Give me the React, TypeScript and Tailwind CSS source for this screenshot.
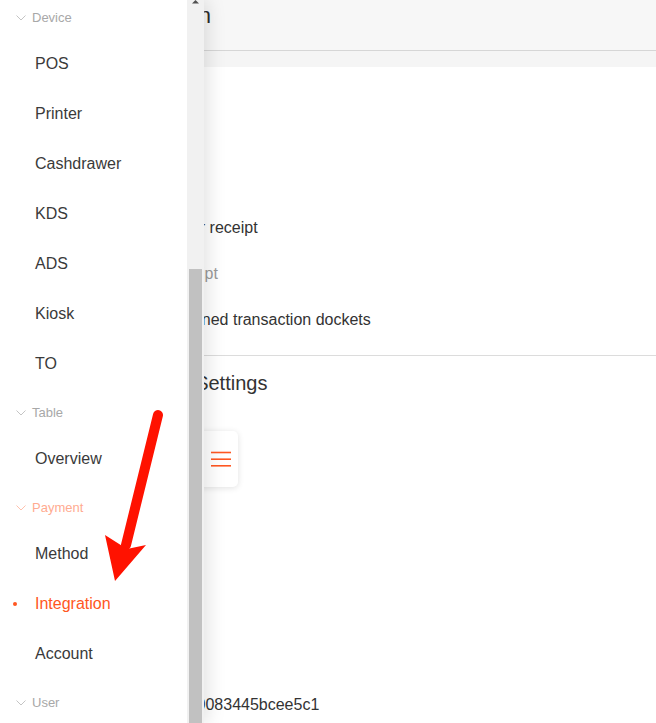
import React from "react";

const ORANGE = "#ff5722";

function Chevron({ color }: { color: string }) {
  return (
    <svg width="10" height="6" viewBox="0 0 10 6" className="shrink-0">
      <polyline points="0.5,0.5 5,5 9.5,0.5" fill="none" stroke={color} strokeWidth="1" />
    </svg>
  );
}

function GroupHeader({ label, active }: { label: string; active?: boolean }) {
  return (
    <div className="h-[45px] pt-[2px] flex items-center pl-[16px] gap-[6px]">
      <Chevron color={active ? "#ffc1ad" : "#c4c4c4"} />
      <span className={active ? "text-[13px] text-[#ffab91]" : "text-[13px] text-[#a8a8a8]"}>{label}</span>
    </div>
  );
}

function Item({ label, active }: { label: string; active?: boolean }) {
  return (
    <div className="h-[50px] flex items-center relative">
      {active && <span className="absolute left-[13px] top-[23px] w-[4px] h-[4px] rounded-full bg-[#ff5722]" />}
      <span className={active ? "pl-[35px] text-[16px] text-[#ff5722]" : "pl-[35px] text-[16px] text-[#3a3a3a]"}>
        {label}
      </span>
    </div>
  );
}

export default function App() {
  return (
    <div className="relative w-[656px] h-[723px] overflow-hidden bg-white font-['Liberation_Sans',Arial,sans-serif]">
      {/* Main page */}
      <div className="flex flex-col w-full">
        <div className="h-[51px] bg-[#f7f7f7] border-b border-[#d6d6d6] pt-[2px] pl-[14px]">
          <span className="text-[22px] leading-[28px] text-[#2b2b2b]">Payment Integration</span>
        </div>
        <div className="h-[16px] bg-[#f5f5f5]" />
        <div className="flex flex-col pt-[138px]">
          <div className="h-[46px] flex items-center pl-[102px] text-[16px] text-[#333]">Print customer receipt</div>
          <div className="h-[46px] flex items-center pl-[97px] text-[16px] text-[#9a9a9a]">Auto print receipt</div>
          <div className="h-[46px] flex items-center pl-[144px] text-[16px] text-[#333]">Print signed transaction dockets</div>
          <div className="mt-[12px] h-px bg-[#dcdcdc]" />
          <div className="mt-[13px] pl-[114px] text-[20px] leading-[28px] text-[#333]">Terminal Settings</div>
          <div className="mt-[34px] ml-[150px] w-[88px] h-[56px] bg-white rounded-[5px] shadow-[0_1px_6px_rgba(0,0,0,0.12)] flex items-center justify-end pr-[7px]">
            <svg width="20" height="16" viewBox="0 0 20 16">
              <line x1="0" y1="1.5" x2="20" y2="1.5" stroke={ORANGE} strokeWidth="1.6" />
              <line x1="0" y1="8.2" x2="20" y2="8.2" stroke={ORANGE} strokeWidth="1.6" />
              <line x1="0" y1="14.8" x2="20" y2="14.8" stroke={ORANGE} strokeWidth="1.6" />
            </svg>
          </div>
          <div className="mt-[206px] pl-[104px] text-[16px] leading-[24px] text-[#333]">c73f1b2e9a40083445bcee5c1</div>
        </div>
      </div>

      {/* Drawer overlay */}
      <div className="absolute left-0 top-0 h-full w-[204px] flex shadow-[3px_0_18px_rgba(0,0,0,0.13)]">
        <div className="w-[187px] h-full bg-white overflow-hidden">
          <div className="-mt-[6px] flex flex-col">
            <GroupHeader label="Device" />
            <Item label="POS" />
            <Item label="Printer" />
            <Item label="Cashdrawer" />
            <Item label="KDS" />
            <Item label="ADS" />
            <Item label="Kiosk" />
            <Item label="TO" />
            <GroupHeader label="Table" />
            <Item label="Overview" />
            <GroupHeader label="Payment" active />
            <Item label="Method" />
            <Item label="Integration" active />
            <Item label="Account" />
            <GroupHeader label="User" />
          </div>
        </div>
        <div className="w-[17px] h-full bg-[#f1f1f1] flex flex-col items-center">
          <svg width="8" height="4" viewBox="0 0 8 4">
            <polygon points="0,3.5 7,3.5 3.5,0" fill="#505050" />
          </svg>
          <div className="mt-[265px] w-[13px] flex-1 bg-[#c1c1c1]" />
        </div>
      </div>

      {/* Red annotation arrow */}
      <svg className="absolute left-0 top-0 pointer-events-none" width="656" height="723" viewBox="0 0 656 723">
        <line x1="158" y1="415" x2="126" y2="545" stroke="#ff1200" strokeWidth="10" strokeLinecap="round" />
        <polygon points="105,535 127,549 146,545 115,581" fill="#ff1200" />
      </svg>
    </div>
  );
}
